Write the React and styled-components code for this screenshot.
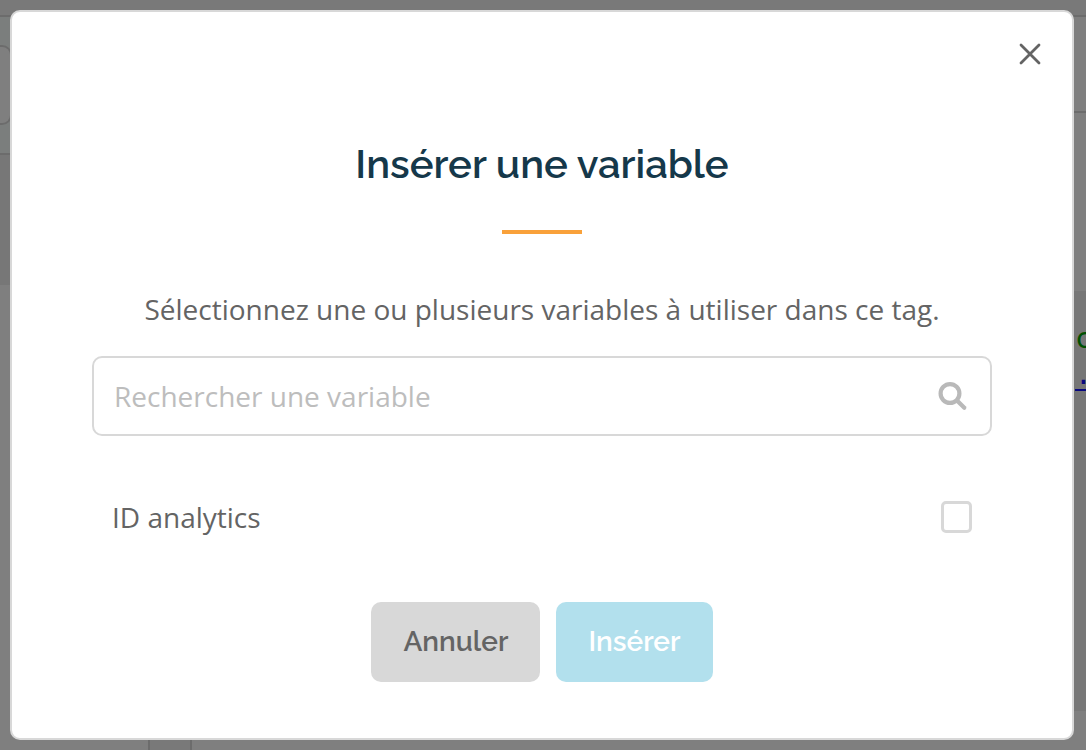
import React, { useState } from 'react';
import styled, { createGlobalStyle } from 'styled-components';

const theme = {
  title: '#15384a',
  text: '#646464',
  border: '#d8d8d8',
  placeholder: '#bdbdbd',
  accent: '#f9a13a',
  primary: '#b2e0ed',
};

const GlobalStyle = createGlobalStyle`
  *, *::before, *::after {
    box-sizing: border-box;
  }

  body {
    margin: 0;
    color: ${theme.text};
    font: 28px/40px 'Open Sans', 'Noto Sans', sans-serif;
  }
`;

/* page behind the dialog */
const Page = styled.div`
  display: flex;
  flex-direction: column;
  height: 100vh;
  overflow: hidden;
  background: #fff;
`;

const TopBar = styled.div`
  flex: none;
  height: 17px;
  background: #f2f2f2;
  border-bottom: 2px solid ${theme.border};
`;

const Columns = styled.div`
  display: flex;
  flex: 1;
  justify-content: space-between;
  min-height: 0;
`;

const Sidebar = styled.div`
  width: 192px;
  display: flex;
  flex-direction: column;
`;

const Filter = styled.div`
  height: 138px;
  padding: 28px 0;
  background: #f6fcfa;
  border-bottom: 2px solid ${theme.border};
`;

const FilterBox = styled.div`
  width: 12px;
  height: 80px;
  background: #fff;
  border: 2px solid ${theme.border};
  border-left: 0;
  border-radius: 0 10px 10px 0;
`;

const SidebarItem = styled.div`
  height: 130px;
  background: #eee;
`;

const Gutter = styled.div`
  width: 44px;
  height: 40px;
  margin: auto 0 0 auto;
  background: #f2f2f2;
  border: solid ${theme.border};
  border-width: 0 2px;
`;

const Main = styled.div`
  width: 12px;
  display: flex;
  flex-direction: column;
`;

const Tabs = styled.div`
  height: 96px;
  border-bottom: 2px solid ${theme.border};
`;

const Code = styled.pre`
  height: 420px;
  margin: 178px 0 0;
  padding: 30px 0 0 1px;
  overflow: hidden;
  background: #eee;
  font: 28px/36px 'DejaVu Sans Mono', monospace;
`;

const Comment = styled.div`
  color: #00a000;
`;

const CodeLink = styled.div`
  color: #1010ff;
  text-decoration: underline;
  text-decoration-thickness: 2px;
  text-underline-offset: 5px;
`;

/* dialog */
const Overlay = styled.div`
  position: fixed;
  inset: 0;
  padding: 10px 12px 10px 10px;
  overflow: auto;
  background: rgba(0, 0, 0, .5);
`;

const Modal = styled.div`
  position: relative;
  display: flex;
  flex-direction: column;
  align-items: center;
  padding: 128px 80px 56px;
  background: #fff;
  border: 2px solid ${theme.border};
  border-radius: 10px;
`;

const CloseButton = styled.button`
  position: absolute;
  top: 20px;
  right: 20px;
  display: flex;
  padding: 11px;
  color: ${theme.text};
  background: none;
  border: 0;
  cursor: pointer;
`;

const Title = styled.h1`
  margin: 0;
  color: ${theme.title};
  font: 600 40px/48px Raleway, Lato, sans-serif;
`;

const Divider = styled.hr`
  width: 80px;
  height: 4px;
  margin: 42px 0 55px;
  background: ${theme.accent};
  border: 0;
`;

const Intro = styled.p`
  margin: 0 0 27px;
  text-align: center;
`;

const SearchField = styled.label`
  display: flex;
  align-items: center;
  width: 100%;
  height: 80px;
  padding: 0 22px 0 20px;
  color: #b9b9b9;
  border: 2px solid ${theme.border};
  border-radius: 10px;
`;

const SearchInput = styled.input`
  flex: 1;
  min-width: 0;
  padding: 0;
  color: ${theme.text};
  font: inherit;
  background: none;
  border: 0;
  outline: 0;

  &::placeholder {
    color: ${theme.placeholder};
    opacity: 1;
  }
`;

const VariableRow = styled.label`
  display: flex;
  align-items: center;
  justify-content: space-between;
  width: 100%;
  height: 90px;
  margin: 36px 0 40px;
  padding: 0 20px;
  cursor: pointer;
`;

const Checkbox = styled.input`
  appearance: none;
  width: 31px;
  height: 32px;
  margin: 0;
  border: 3px solid ${theme.border};
  border-radius: 5px;

  &:checked {
    background: ${theme.primary};
  }
`;

const Actions = styled.div`
  display: flex;
  gap: 16px;
`;

const Button = styled.button`
  height: 80px;
  padding: 0 32px;
  color: ${props => (props.$primary ? '#fff' : theme.text)};
  font: 600 28px/40px Raleway, Lato, sans-serif;
  background: ${props => (props.$primary ? theme.primary : theme.border)};
  border: 0;
  border-radius: 10px;
  cursor: pointer;
`;

const CloseIcon = () => (
  <svg width="22" height="22" viewBox="0 0 22 22" fill="none" stroke="currentColor" strokeWidth="2.8" strokeLinecap="round" aria-hidden="true">
    <path d="M2 2l18 18M20 2L2 20" />
  </svg>
);

const SearchIcon = () => (
  <svg width="30" height="30" viewBox="0 0 30 30" fill="none" stroke="currentColor" aria-hidden="true">
    <circle cx="12" cy="12.5" r="9.4" strokeWidth="4.2" />
    <path d="M19 19.5l7.3 7.3" strokeWidth="4.2" strokeLinecap="round" />
  </svg>
);

export default () => {
  const [search, setSearch] = useState('');
  const [checked, setChecked] = useState(false);

  return (
    <>
      <GlobalStyle />
      <Page aria-hidden="true">
        <TopBar />
        <Columns>
          <Sidebar>
            <Filter>
              <FilterBox />
            </Filter>
            <SidebarItem />
            <Gutter />
          </Sidebar>
          <Main>
            <Tabs />
            <Code>
              <Comment>c</Comment>
              <CodeLink>.</CodeLink>
            </Code>
          </Main>
        </Columns>
      </Page>
      <Overlay>
        <Modal role="dialog" aria-modal="true" aria-labelledby="modal-title">
          <CloseButton type="button" aria-label="Fermer">
            <CloseIcon />
          </CloseButton>
          <Title id="modal-title">Insérer une variable</Title>
          <Divider />
          <Intro>Sélectionnez une ou plusieurs variables à utiliser dans ce tag.</Intro>
          <SearchField>
            <SearchInput
              type="text"
              aria-label="Rechercher une variable"
              placeholder="Rechercher une variable"
              value={search}
              onChange={e => setSearch(e.target.value)}
            />
            <SearchIcon />
          </SearchField>
          <VariableRow>
            <span>ID analytics</span>
            <Checkbox
              type="checkbox"
              checked={checked}
              onChange={e => setChecked(e.target.checked)}
            />
          </VariableRow>
          <Actions>
            <Button type="button">Annuler</Button>
            <Button type="button" $primary>Insérer</Button>
          </Actions>
        </Modal>
      </Overlay>
    </>
  );
};
